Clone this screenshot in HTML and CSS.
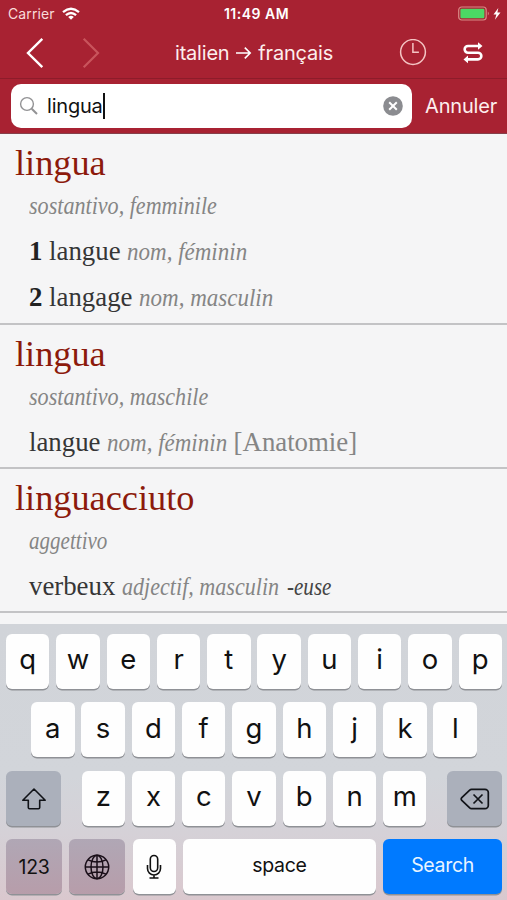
FILE: index.html
```html
<!DOCTYPE html>
<html lang="fr">
<head>
<meta charset="utf-8">
<title>Dictionnaire</title>
<link rel="stylesheet" href="styles.css">
</head>
<body>
<header class="header">
  <div class="status">
    <div class="carrier"><span>Carrier</span>
      <svg width="18" height="14" viewBox="0 0 18 14" fill="none" stroke="#fff" stroke-width="2.3"><path d="M1 5.2Q9-1.6 17 5.2M3.9 8.2Q9 3.8 14.1 8.2"/><path d="M9 12.8 6.2 9.9Q9 7.8 11.8 9.9Z" fill="#fff" stroke="none"/></svg>
    </div>
    <div class="time">11:49 AM</div>
    <div class="power">
      <svg width="44" height="16" viewBox="0 0 44 16"><rect x=".7" y="1" width="27.5" height="13" rx="3" fill="none" stroke="#d88a86" stroke-width="1.2"/><rect x="2.4" y="2.8" width="24" height="9.4" rx="1.2" fill="#4bd964"/><path d="M29.8 5.6q2 2 0 4z" fill="#d88a86"/><path d="M40.3 2 35.5 8.4h2.9l-1.5 5.3 5.6-7.2h-3.1z" fill="#fff"/></svg>
    </div>
  </div>
  <nav class="nav">
    <svg class="back" width="18" height="32" viewBox="0 0 18 32"><path d="M16.3 1.8 2 16l14.3 14.2" fill="none" stroke="#fff" stroke-width="2.4"/></svg>
    <svg class="forward" width="18" height="32" viewBox="0 0 18 32"><path d="M1.7 1.8 16 16 1.7 30.2" fill="none" stroke="#c9545c" stroke-width="2.2"/></svg>
    <div class="pair">italien <svg width="17" height="14" viewBox="0 0 17 14"><path d="M1 7h14M9.8 1.6 15.2 7l-5.4 5.4" fill="none" stroke="#fff" stroke-width="1.6"/></svg> français</div>
    <svg class="history" width="28" height="28" viewBox="0 0 28 28"><circle cx="14" cy="13" r="12.4" fill="none" stroke="#f4c4c3" stroke-width="1.5"/><path d="M13.9 4v9.2h6" fill="none" stroke="#f4c4c3" stroke-width="1.5"/></svg>
    <svg class="swap" width="22" height="24" viewBox="0 0 22 24"><path d="M16 5H6a3.3 3.3 0 0 0 0 6.700h10a3.300 3.300 0 0 1 0 6.700H6" fill="none" stroke="#fff" stroke-width="2.600"/><path d="M16 1.200v7.600l4.500-3.800zM6 14.600v7.600l-4.500-3.800z" fill="#fff"/></svg>
  </nav>
  <div class="searchbar">
    <div class="field">
      <svg width="20" height="20" viewBox="0 0 20 20" fill="none" stroke="#929294"><circle cx="8" cy="8" r="6.4" stroke-width="1.4"/><path d="m12.7 12.7 5.3 5.3" stroke-width="2"/></svg>
      <span class="query">lingua</span><span class="caret"></span>
      <svg class="clear" width="20" height="20" viewBox="0 0 20 20"><circle cx="10" cy="10" r="9.8" fill="#8b8c90"/><path d="m6.2 6.2 7.6 7.6m0-7.6-7.6 7.6" stroke="#fff" stroke-width="2"/></svg>
    </div>
    <span class="cancel">Annuler</span>
  </div>
</header>
<main class="results">
  <article class="entry first">
    <h2>lingua</h2>
    <p class="sub"><i class="s85">sostantivo, femminile</i></p>
    <p><b>1</b> langue <i class="s88">nom, féminin</i></p>
    <p><b>2</b> langage <i class="s88">nom, masculin</i></p>
  </article>
  <article class="entry">
    <h2>lingua</h2>
    <p class="sub"><i class="s85">sostantivo, maschile</i></p>
    <p>langue <i class="s88 before-field">nom, féminin</i> <span class="domain">[Anatomie]</span></p>
  </article>
  <article class="entry">
    <h2>linguacciuto</h2>
    <p class="sub"><i class="s81">aggettivo</i></p>
    <p>verbeux <i class="s85 before-ending">adjectif, masculin</i> <i class="s81 ending">-euse</i></p>
  </article>
</main>
<section class="keyboard">
  <div class="row"><div class="key">q</div><div class="key">w</div><div class="key">e</div><div class="key">r</div><div class="key">t</div><div class="key">y</div><div class="key">u</div><div class="key">i</div><div class="key">o</div><div class="key">p</div></div>
  <div class="row middle"><div class="key">a</div><div class="key">s</div><div class="key">d</div><div class="key">f</div><div class="key">g</div><div class="key">h</div><div class="key">j</div><div class="key">k</div><div class="key">l</div></div>
  <div class="row third">
    <div class="key dark"><svg width="26" height="24" viewBox="0 0 26 24"><path d="M13 2 1.8 13.2h5.5v7.3q0 1.2 1.2 1.2h9q1.2 0 1.2-1.2v-7.3h5.5z" fill="none" stroke="#111318" stroke-width="1.6" stroke-linejoin="round"/></svg></div>
    <div class="letters"><div class="key">z</div><div class="key">x</div><div class="key">c</div><div class="key">v</div><div class="key">b</div><div class="key">n</div><div class="key">m</div></div>
    <div class="key dark"><svg width="30" height="22" viewBox="0 0 30 22" fill="none" stroke="#111318" stroke-width="1.7" stroke-linejoin="round"><path d="M11.5 1.3H25a3.3 3.3 0 0 1 3.3 3.3v12.8a3.3 3.3 0 0 1-3.3 3.3H11.5q-1 0-1.8-.8L1.8 12.3q-1.2-1.3 0-2.6L9.7 2.1q.8-.8 1.8-.8z"/><path d="m13.5 6.5 9 9m0-9-9 9"/></svg></div>
  </div>
  <div class="row bottom">
    <div class="key mauve label">123</div>
    <div class="key mauve"><svg width="26" height="26" viewBox="0 0 26 26" fill="none" stroke="#190e18" stroke-width="1.5"><circle cx="13" cy="13" r="11.7"/><ellipse cx="13" cy="13" rx="6" ry="11.7"/><path d="M13 1.3v23.4M1.3 13h23.4M4 5.8q9 4.4 18 0M4 20.2q9-4.4 18 0"/></svg></div>
    <div class="key mic"><svg width="16" height="26" viewBox="0 0 16 26" fill="none" stroke="#111" stroke-width="1.6"><rect x="4.3" y="1.5" width="7.4" height="16" rx="3.7"/><path d="M1.5 11v3.5a6.5 6.5 0 0 0 13 0V11M8 21v3M3.500 24h9"/></svg></div>
    <div class="key label">space</div>
    <div class="key label search">Search</div>
  </div>
</section>
</body>
</html>
```
FILE: styles.css
```css
* { box-sizing: border-box; }
body {
  margin: 0;
  width: 507px;
  height: 900px;
  overflow: hidden;
  display: flex;
  flex-direction: column;
  background: #f5f5f6;
  font-family: Inter, "Liberation Sans", sans-serif;
}
svg { display: block; flex: none; }
h2, p { margin: 0; font-weight: 400; }

.header {
  height: 134px;
  flex: none;
  background: #a82232;
  color: #fff;
  border-bottom: 1px solid #85404a;
}
.status {
  height: 27px;
  display: grid;
  grid-template-columns: 1fr auto 1fr;
  align-items: center;
  padding: 0 5px 0 8px;
  font-size: 14px;
}
.carrier { display: flex; gap: 7px; align-items: center; color: #f9dcda; letter-spacing: .1px; }
.time { margin-left: 3px; font-weight: 600; font-size: 14px; letter-spacing: .5px; }
.power { display: flex; justify-content: flex-end; }
.nav {
  height: 52px;
  display: flex;
  align-items: center;
  padding: 0 23px 0 26px;
  border-bottom: 1px solid #8d1c2a;
}
.forward { margin-left: 38px; }
.pair {
  margin-left: 75px;
  width: 158px;
  display: flex;
  align-items: center;
  justify-content: space-between;
  font-size: 20px;
  letter-spacing: -.2px;
  color: #fdeeed;
  white-space: nowrap;
}
.history { margin-left: auto; }
.swap { margin-left: 35px; }
.searchbar { height: 54px; display: flex; align-items: center; padding: 0 10px 0 11px; }
.field {
  width: 401px;
  height: 44px;
  display: flex;
  align-items: center;
  padding: 0 9px 0 8px;
  border-radius: 10px;
  background: #fff;
  color: #111;
}
.query { margin-left: 8px; font-size: 20px; letter-spacing: -.2px; }
.caret { width: 2px; height: 26px; background: #111; }
.clear { margin-left: auto; }
.cancel { margin-left: auto; font-size: 20px; letter-spacing: -.2px; color: #fdeeed; }

.results { height: 490px; flex: none; overflow: hidden; }
.entry {
  height: 144px;
  padding: 9px 0 0 29px;
  border-bottom: 2px solid #c3c3c5;
  font-family: "Liberation Serif", serif;
  font-size: 26.8px;
  color: #363636;
}
.first { height: 191px; }
.entry h2 { margin-left: -14px; font-size: 36.3px; line-height: 40px; color: #8c1a0c; }
.entry p { line-height: 46px; white-space: nowrap; }
.entry .sub { line-height: 45px; }
.entry i { display: inline-block; font-size: 26px; line-height: 30px; color: #858585; transform-origin: left; }
.s81 { transform: scaleX(.81); }
.s85 { transform: scaleX(.85); }
.s88 { transform: scaleX(.885); }
.before-field { margin-right: -16px; }
.before-ending { margin-right: -27px; }
.entry .ending { color: #444; }
.domain { color: #858585; }
b { color: #222; }

.keyboard {
  flex: 1;
  display: flex;
  flex-direction: column;
  gap: 13.5px;
  padding: 9.5px 5px 0 6px;
  background: linear-gradient(#d1d4d9 0%, #d2d5da 55%, #d5d1d7 76%, #dac8ce 100%);
}
.row { height: 55px; display: grid; grid-template-columns: repeat(10, 1fr); gap: 6.8px; }
.middle { grid-template-columns: repeat(9, 1fr); padding: 0 25px; }
.third { display: flex; justify-content: space-between; gap: 0; }
.third > .key { width: 55px; }
.letters { width: 345px; display: grid; grid-template-columns: repeat(7, 1fr); gap: 6.8px; }
.bottom { grid-template-columns: 56px 56px 43px 193px 1fr; gap: 7.3px; }
.key {
  display: flex;
  align-items: center;
  justify-content: center;
  padding-bottom: 4px;
  border-radius: 6px;
  background: #fefefe;
  box-shadow: 0 1.5px 0 #8f9196;
  color: #111;
  font-size: 27.5px;
  font-weight: 400;
}
.dark { background: #abb0bb; padding: 2px 0 0; }
.mauve { background: linear-gradient(#b0a7b5, #b79daa); padding: 0; }
.mic { padding: 0; }
.label { font-size: 19.5px; letter-spacing: -.3px; }
.search { background: #007aff; color: #e9f4ff; }
```
